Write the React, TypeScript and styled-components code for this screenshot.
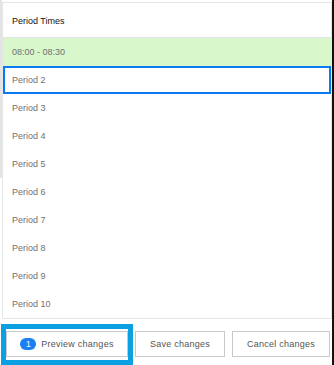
import React from "react";
import styled, { createGlobalStyle } from "styled-components";

const Global = createGlobalStyle`
  html, body { margin: 0; padding: 0; background: #fff; overflow: hidden; }
  body { font-family: "Liberation Sans", Arial, sans-serif; }
  * { box-sizing: border-box; }
`;

const Page = styled.div`
  display: flex;
  width: 334px;
  height: 365px;
  border-right: 2px solid #111;
`;

const SideStrip = styled.div`
  width: 2px;
  height: 178px;
  background: #e4e4e4;
  flex: none;
`;

const Main = styled.div`
  flex: 1;
  display: flex;
  flex-direction: column;
  min-width: 0;
`;

const Panel = styled.div`
  margin-top: 2px;
  border: 1px solid #e6e6e6;
  border-right-color: #e6e6e6;
  display: flex;
  flex-direction: column;
`;

const Header = styled.div`
  height: 35px;
  border-bottom: 1px solid #e6e6e6;
  display: flex;
  align-items: center;
  padding-left: 9px;
  padding-top: 1px;
  font-size: 9px;
  color: #111;
`;

const Row = styled.div<{ $selected?: boolean; $active?: boolean }>`
  height: 28px;
  display: flex;
  align-items: center;
  padding-left: 9px;
  font-size: 9px;
  color: #707070;
  background: ${(p) => (p.$selected ? "#d8f7cb" : "#fff")};
  outline: ${(p) => (p.$active ? "2px solid #0a78ef" : "none")};
  outline-offset: -2px;
`;

const ButtonBar = styled.div`
  display: flex;
  gap: 7px;
  padding: 12px 0 0 4px;
`;

const Button = styled.button<{ $w: number; $highlight?: boolean }>`
  position: relative;
  width: ${(p) => p.$w}px;
  height: 26px;
  background: #fff;
  border: 1px solid #c9c9c9;
  border-radius: 0;
  font-family: "Liberation Sans", Arial, sans-serif;
  font-size: 9px;
  letter-spacing: 0.25px;
  color: #555;
  display: flex;
  align-items: center;
  justify-content: center;
  gap: 5px;
  padding: 0;
  ${(p) =>
    p.$highlight
      ? `&::after {
          content: "";
          position: absolute;
          top: -8px;
          bottom: -9px;
          left: -6px;
          right: -6px;
          border: 5px solid #0aa0e1;
          pointer-events: none;
        }`
      : ""}
`;

const Badge = styled.span`
  display: inline-flex;
  align-items: center;
  justify-content: center;
  width: 16px;
  height: 12px;
  border-radius: 6px;
  background: #1a7ff2;
  color: #fff;
  font-size: 8.5px;
  letter-spacing: 0;
`;

const periods = [
  "08:00 - 08:30",
  "Period 2",
  "Period 3",
  "Period 4",
  "Period 5",
  "Period 6",
  "Period 7",
  "Period 8",
  "Period 9",
  "Period 10",
];

export default function App() {
  return (
    <>
      <Global />
      <Page>
        <SideStrip />
        <Main>
          <Panel>
            <Header>Period Times</Header>
            {periods.map((p, i) => (
              <Row key={p} $selected={i === 0} $active={i === 1}>
                {p}
              </Row>
            ))}
          </Panel>
          <ButtonBar>
            <Button $w={122} $highlight>
              <Badge>1</Badge>
              Preview changes
            </Button>
            <Button $w={90}>Save changes</Button>
            <Button $w={98}>Cancel changes</Button>
          </ButtonBar>
        </Main>
      </Page>
    </>
  );
}
